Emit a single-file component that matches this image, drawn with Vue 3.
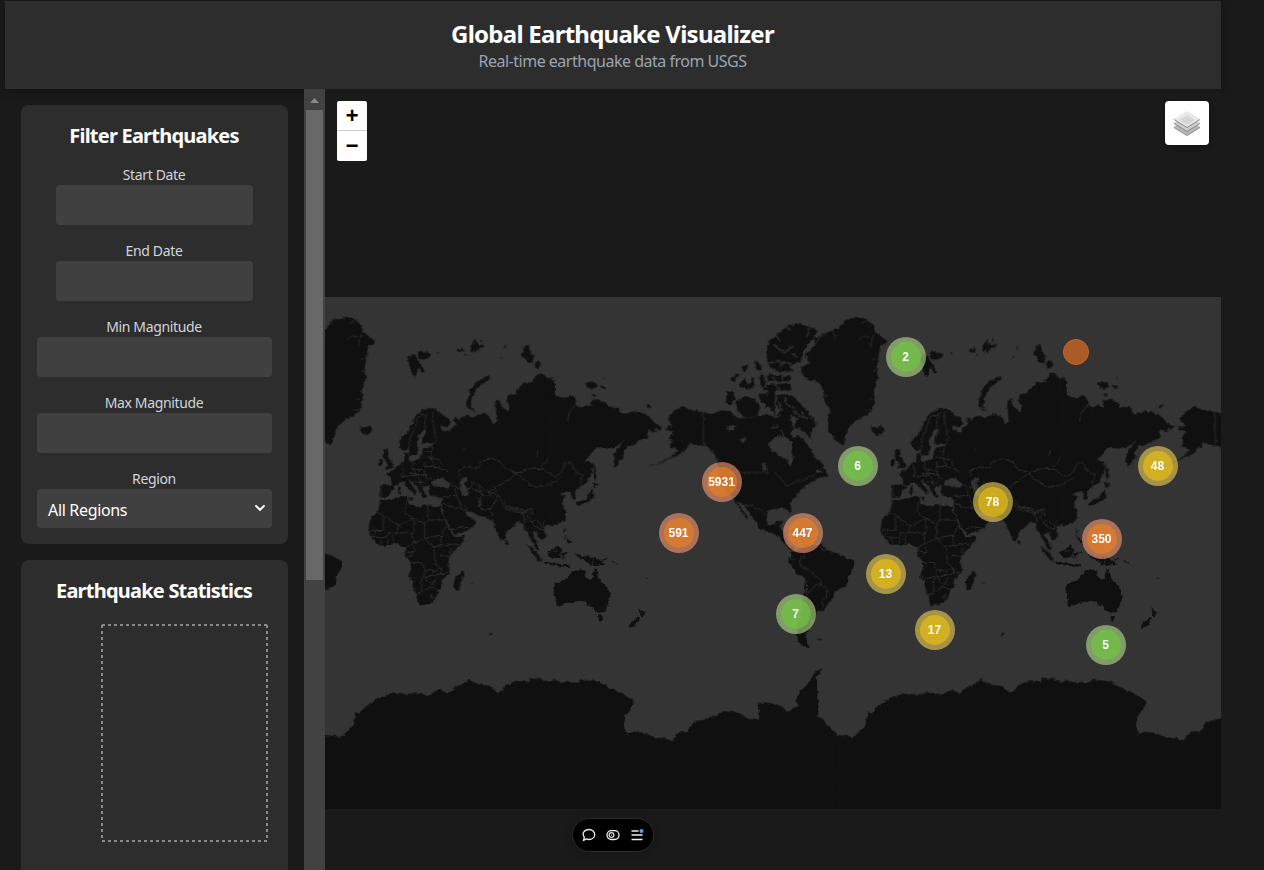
<script setup>
const filters = [
  { label: 'Start Date', kind: 'date' },
  { label: 'End Date', kind: 'date' },
  { label: 'Min Magnitude', kind: 'number' },
  { label: 'Max Magnitude', kind: 'number' },
]

const clusters = [
  { n: 2, x: 906, y: 357, size: 'small' },
  { n: 6, x: 858, y: 466, size: 'small' },
  { n: 48, x: 1158, y: 466, size: 'medium' },
  { n: 5931, x: 722, y: 482, size: 'large' },
  { n: 78, x: 993, y: 502, size: 'medium' },
  { n: 591, x: 679, y: 533, size: 'large' },
  { n: 447, x: 803, y: 533, size: 'large' },
  { n: 350, x: 1102, y: 539, size: 'large' },
  { n: 13, x: 886, y: 574, size: 'medium' },
  { n: 7, x: 796, y: 614, size: 'small' },
  { n: 17, x: 935, y: 630, size: 'medium' },
  { n: 5, x: 1106, y: 645, size: 'small' },
]
const place = (c) => ({ left: `${c.x - 345}px`, top: `${c.y - 109}px` })

// The same world repeats every 512px (1536 units of the land group).
const copies = [-1536, 0, 1536]
</script>

<template>
  <div class="page">
    <header class="header">
      <h1>Global Earthquake Visualizer</h1>
      <p>Real-time earthquake data from USGS</p>
    </header>

    <div class="body">
      <aside class="sidebar">
        <section class="card filters">
          <h2>Filter Earthquakes</h2>
          <div v-for="f in filters" :key="f.label" class="field">
            <label>{{ f.label }}</label>
            <div class="input" :class="f.kind"></div>
          </div>
          <div class="field last">
            <label>Region</label>
            <div class="select">
              <span>All Regions</span>
              <svg width="12" height="8" viewBox="0 0 12 8"><path d="M1.4 1.4 6 5.8l4.6-4.4" fill="none" stroke="#fff" stroke-width="2" /></svg>
            </div>
          </div>
        </section>
        <section class="card stats">
          <h2>Earthquake Statistics</h2>
          <svg class="chart" width="168" height="219" viewBox="0 0 168 219">
            <path d="M1 2H167M166 2V217M1 2V217M1 218H167" fill="none" stroke="#8a8a8a" stroke-width="2" stroke-dasharray="3 3" />
          </svg>
        </section>
      </aside>

      <div class="scrollbar">
        <svg width="21" height="21" viewBox="0 0 21 21"><path d="M6 14h9L10.500 9z" fill="#8b8b8b" /></svg>
        <div class="thumb"></div>
      </div>

      <main class="map">
        <svg class="world" width="896" height="512" viewBox="0 0 896 512">
          <defs>
            <filter id="coast" filterUnits="userSpaceOnUse" x="-10" y="0" width="916" height="520" color-interpolation-filters="sRGB">
              <feTurbulence type="fractalNoise" baseFrequency="0.24" numOctaves="3" seed="4" result="n" />
              <feDisplacementMap in="SourceGraphic" in2="n" scale="4" xChannelSelector="R" yChannelSelector="G" />
            </filter>
            <g id="earth">
              <!-- Eurasia, western half -->
              <path class="land" d="M236 467 223 456 222 435 240 420 252 405 262 380 272 362 295 345 318 337 335 345 350 357 372 372 377 385 365 397 345 390 350 405 362 410 374 400 385 388 388 370 398 368 400 380 412 365 430 362 440 368 460 362 475 354 487 362 495 370 507 388 515 380 513 350 510 318 522 312 530 335 550 350 556 335 545 320 548 300 570 298 575 285 600 262 620 262 640 234 655 240 668 250 690 262 690 677 670 683 660 692 656 708 665 720 655 733 648 737 640 725 635 710 626 712 622 725 635 740 643 767 633 762 622 740 612 725 608 710 598 705 595 685 580 680 570 690 545 710 543 728 530 740 520 720 510 695 508 683 495 675 480 665 465 663 435 650 415 643 425 660 440 670 455 677 440 700 410 712 388 718 380 705 355 660 350 640 352 610 330 605 316 600 310 590 315 572 298 574 292 582 305 604 298 610 285 590 275 574 262 560 250 554 258 568 275 590 268 602 262 590 245 575 235 562 225 562 212 572 200 585 190 605 165 610 163 570 200 568 196 545 182 538 205 525 225 505 238 498 240 476 252 475 252 494 Z" />
              <path class="sea" d="M236 468 250 460 255 482 275 480 281 460 275 440 280 425 298 400 307 405 293 430 290 446 325 445 325 452 300 458 292 470 287 490 262 498 250 494 252 474 240 474z" />
              <path class="sea" d="M320 570 325 555 340 550 355 552 378 566 370 578 345 576z M405 555 425 545 428 557 415 565 430 580 428 603 412 600 404 575z M346 550 358 545 352 556z M370 394 382 386 388 378 395 385 384 396 372 408 360 412 352 404z" />
              <!-- Nordic and British islands -->
              <path class="land" d="M100 393 110 404 102 406 118 420 135 415 143 403 133 392 118 398z M173 485 175 463 190 462 188 475 205 512 204 518 178 523 190 510z M160 512 162 496 174 492 172 512z M247 185 262 178 272 182 280 200 290 212 300 232 290 232 280 215 271 248 262 240 256 220z M278 172 290 166 300 172 318 176 316 188 298 194 282 192z M422 330 430 300 440 275 460 257 482 245 494 243 492 255 470 268 455 282 446 300 440 325 436 335 448 345 458 352 440 345z M395 165 403 160 405 166 412 155 414 164 420 170 410 168 400 171z M432 153 438 152 440 146 446 145 448 138 452 130 452 142 460 148 468 150 478 150 472 158 465 158 460 163 462 170 455 164 452 176 446 166 440 174 436 164 440 158z M590 180 600 150 610 148 618 172 626 184 622 205 610 200z M628 205 640 195 650 212 632 222z M337 172h6v4h-6z M538 155h5v4h-5z M526 186h5v4h-5z M465 133h8v4h-8z M418 178h6v3h-6z M220 570 228 580 224 602 219 592z M250 606 266 608 262 618z" />
              <!-- Africa -->
              <g transform="translate(0 615)">
                <path class="land" d="M165 0 182 0 205 -4 238 -12 247 -8 250 12 285 20 298 12 320 17 350 20 345 28 355 50 368 80 383 105 388 112 420 108 410 130 385 155 372 175 370 190 375 205 372 222 350 240 352 260 340 270 335 290 320 308 305 313 283 317 278 305 275 285 265 265 260 240 250 230 258 205 255 185 240 165 242 145 230 138 215 130 190 137 165 137 150 125 135 105 130 90 135 60 145 45 160 35z" />
                <path class="land" d="M388 268 386 250 392 230 405 222 412 210 415 225 406 255 400 270z M542 118 550 128 546 133 541 128z M608 135 622 145 645 170 652 187 638 180 622 160z M652 187 690 187 690 195 665 192z M668 155 690 150 700 140 712 148 705 170 690 174 672 168z M494 398h7v6h-7z M40 433l7 5z M435 248h10v2h-10z" />
                <g class="line">
                  <path d="M165 38 145 45M165 38 220 78 265 55 240 38 245 0M175 50V92L132 90M220 78 215 100 192 98 185 110 165 115M265 55 300 72 308 60V15M308 60H355M300 72 298 115 265 130 262 105 268 90 265 55M265 100 215 98M205 105 205 135M188 115V137M165 115 168 137M150 92 145 108 165 115M362 80 350 110 330 108 300 115M265 130 240 145M300 115 320 140 350 137 405 130M350 137 348 110M328 145 330 190 345 200M376 142V170L345 165M265 140 270 155 245 175M255 187H290L298 208 330 215 345 200 350 215M252 233H300L345 220M290 237V275L275 285M300 237 322 255 335 232M290 275 318 260 340 270M298 210V237M245 155H270M316 290 322 286 326 292 320 297zM340 225 370 215M350 205V225M355 10 375 20 400 25 420 30M400 0 435 35M465 0V25L490 30 505 15M490 30 505 45M505 15 520 0M538 0 545 20 590 35 600 70M545 20 600 30 610 50 625 75M625 75 650 90 660 60M620 65 635 60 650 80M380 90 410 80 440 85M595 40 610 30 620 45" />
                </g>
              </g>
              <g class="line">
                <path d="M252 465 255 430 270 395 280 365 300 360 315 350M302 360 298 400M325 350 322 375 335 430 325 450M322 450 318 490 330 515 370 530M265 495 262 520 300 530 300 498M228 508 235 530 230 550M300 470 318 470M295 485 318 490M300 515 330 515M262 520 280 545 290 575M255 535 300 540 320 555M230 545 280 540M270 560 300 565M300 530 305 560M185 568 210 575M165 580 172 605M318 490 345 495 350 515M402 545 400 525 430 515 460 520 465 500 500 490 525 500 540 520 575 535 550 555 510 580 490 590 460 570 440 560V580L425 580M575 535 620 520 640 520 690 535M575 535 610 565 640 578 690 560M380 570 410 585M388 580 395 600M460 570 470 600 500 600M490 590 520 600 500 640 465 645M520 600 540 640 590 655 620 640M465 600 460 640M355 605 395 600 410 640M440 580 480 600M500 570 515 590M590 655 605 680M620 640 625 660" />
              </g>
              <path class="line" d="M648 515 660 505 668 488M418 465h-6M635 485l5-20" />

              <!-- Eastern Asia, Pacific and Alaska -->
              <g transform="translate(660 0)">
                <path class="land" d="M0 250 22 248 27 265 20 285 5 300 20 300 40 305 62 310 75 300 92 310 92 330 105 340 120 330 137 335 140 315 160 313 180 322 190 335 220 338 228 355 255 355 262 348 285 352 310 362 330 385 352 393 345 405 330 400 335 412 310 403 308 430 280 440 265 450 250 450 233 470 236 490 225 495 218 512 209 518 207 500 205 485 215 465 235 440 243 430 230 442 205 460 165 460 150 460 135 480 120 497 135 500 145 512 140 535 130 555 118 568 105 575 90 590 92 612 80 615 78 592 62 590 45 600 62 605 50 625 62 650 55 675 35 690 0 692z" />
                <path class="land" d="M122 265 135 260 150 262 158 272 145 282 128 280z M165 272 182 275 180 282 168 278z M140 294 152 298 150 305 142 303z M302 334 315 329 320 335 308 340z M146 502 152 520 155 545 148 558 146 530z M142 560 160 568 148 580z M143 582 148 605 130 620 100 632 96 622 125 610 135 590z M58 662 62 668 55 682z M175 248h4v3h-4z M42 675h14l-8 8z" />
                <path class="land" d="M410 335 440 345 480 352 500 358 530 346 555 350 580 370 620 368 650 360 690 362 720 340 735 360 745 400 735 415 745 430 760 420 775 430 800 465 811 490 835 505 838 515 810 530 850 545 825 548 810 555 780 575 760 595 735 625 740 640 735 656 722 640 700 640 670 645 665 660 668 690 685 692 695 678 715 677 705 695 720 722 734 752 750 760 735 765 715 742 700 722 675 712 645 700 630 680 615 655 600 632 575 620 595 650 610 670 605 672 585 645 570 615 545 595 530 560 520 530 518 500 500 470 485 455 450 447 440 443 425 460 405 478 380 488 345 505 300 515 345 502 385 480 400 465 375 455 380 435 370 430 388 410 365 405 362 395 385 393 368 372 385 350z" />
                <path class="land" d="M670 190 668 155 690 130 690 195z M545 290 565 288 570 310 555 332 543 320z M572 318 600 303 630 310 645 335 638 365 600 368 578 350z M555 255 575 235 583 240 570 250 566 262z M590 215 608 208 608 218 600 228 592 226z M580 270 590 262 600 245 604 262 615 266 626 258 630 276 610 282 590 278z M628 195 636 198 650 215 645 228 632 218z M617 250 625 246 628 258 620 260z M642 252 652 232 662 250 660 275 648 278z M642 300 665 292 667 330 656 326 646 316z M668 232 684 240 690 252 676 246z M668 290 690 280 690 360 675 340z M650 178l8 8z M652 282 680 268 700 282 680 290z" />
                <path class="sea" d="M672 445 690 425 720 425 745 440 740 465 745 495 735 515 725 490 695 480 675 462z M545 395 575 388 565 405 550 405z M582 435 605 425 595 445z M650 505 660 500 665 525 655 528z" />
                <g class="line">
                  <path d="M475 352V447L500 465 522 500M542 532H675M685 532 705 545 725 575 755 560 790 550 815 535M580 625 620 632 650 645 660 660" />
                  <path d="M0 530 30 545 50 530 60 502 80 505 92 530 115 540 105 570M0 575 30 560 50 545M68 380 72 355 90 330M0 505 8 488" />
                </g>
                <g transform="translate(0 615)">
                  <path class="land" d="M25 260 30 250 55 243 75 225 80 215 100 208 122 212 118 228 135 240 142 235 148 205 158 220 165 240 185 258 197 285 192 305 180 335 160 338 145 330 135 312 128 320 120 305 95 302 65 310 50 317 35 318 33 300 27 280z M158 346 174 346 170 362 165 366z M280 318 290 332 302 335 292 353 285 345 286 335z M252 378 262 365 278 350 284 355 270 378 255 384z" />
                  <path class="land" d="M0 185 30 190 75 196 75 202 30 197 0 193z M8 155 25 150 40 135 47 145 40 170 20 174 10 165z M50 160 75 155 55 167 65 182 55 170 50 180z M90 160 112 168 130 170 150 172 165 180 182 195 165 192 150 198 135 195 118 180 100 172z M55 80 65 90 60 105 78 125 76 133 62 120z M5 70 12 68 8 78z M57 45l5 5-4 14z M170 180 190 172 175 185z M95 10 115 5 125 0 100 18z M200 180 230 200 200 184z M240 248 257 257 243 250z M300 236l8-6-4 6z M250 225l8 14z" />
                  <path class="line" d="M143 170V198M60 85l5 45M20 155l20-4" />
                </g>
              </g>

              <!-- Atlantic side of the Americas -->
              <g transform="translate(1320 0)">
                <path class="land" d="M235 452 210 435 190 410 188 375 195 345 178 315 175 285 160 260 130 255 108 235 110 215 135 205 120 180 150 150 145 130 180 115 220 100 240 75 280 67 305 72 325 90 330 110 368 140 345 155 340 190 335 220 340 250 325 290 330 310 322 345 295 365 275 375 250 400 240 430z" />
                <path class="land" d="M10 140 40 115 70 90 110 87 155 105 150 125 130 145 115 170 105 200 70 215 88 230 40 230 10 215 5 185z M5 240 75 243 76 258 10 260z M5 268 75 265 80 285 20 285z M35 300 80 298 100 320 125 345 155 385 140 410 135 430 110 405 85 395 100 370 60 355 35 335z M5 300 25 300 20 330 0 340z M50 375 70 385 60 400 40 395z M165 520 182 525 190 545 170 540z" />
                <path class="line inlet" d="M26 148 42 164 66 170 86 152M8 206 40 196 60 206M40 216 60 200 92 212M30 120 48 138M22 246 34 258M52 243V258M30 268 44 284M60 308 66 330 90 340M84 345 100 362 130 372M40 320 52 345M110 350 120 366M66 96 76 108M132 100 128 122M80 176 100 186" />
                <path class="line inlet" d="M50 405 56 425M96 400 104 420 128 430M14 352 30 366 48 362M18 400 40 392" />
                <path class="line" d="M150 150 165 125 185 120M280 135 295 123 315 125M325 120 315 155M195 98 215 125M205 110 210 140M305 75 290 85M300 345 322 345M334 190 322 194M336 230 324 226M322 310 308 316M190 350 200 354M178 300 188 302" />
                <g transform="translate(0 615)">
                  <path class="land" d="M75 155 85 152 95 158 100 150 120 140 130 135 160 137 172 130 178 145 200 155 240 170 268 185 265 205 252 225 248 255 215 270 205 290 190 310 175 332 155 338 150 355 140 362 135 378 130 395 120 405 125 430 137 441 118 442 100 425 95 400 105 350 115 300 118 260 120 235 95 220 75 190 70 180 80 165z M60 95 105 85 130 105 100 100z M120 108 140 105 140 115 120 115z M157 416h14v4h-14z M255 433l9 6z" />
                  <path class="line" d="M120 170 105 180 105 200 125 205 150 225 168 240 170 255 185 265 185 290 170 305 175 320M120 170 115 150M165 135 170 150 200 150M190 135V150M75 175 90 180M122 240 125 260 130 280 150 255 170 255M125 260 122 300 112 350 108 380" />
                </g>
              </g>

              <!-- Antarctica -->
              <path class="land" d="M-3 1322 25 1320 48 1328 85 1290 92 1252 105 1255 120 1235 150 1215 175 1203 200 1196 245 1197 270 1192 310 1200 345 1184 370 1195 385 1180 410 1168 430 1153 450 1165 495 1173 520 1194 545 1170 570 1158 610 1160 615 1150 650 1152 670 1162 685 1154 710 1162 750 1163 770 1154 820 1160 850 1178 890 1195 928 1220 918 1245 902 1260 896 1290 905 1322 915 1310 950 1313 990 1326 1020 1330 1040 1338 1064 1308 1090 1310 1105 1282 1150 1270 1180 1257 1195 1245 1240 1252 1270 1272 1302 1273 1298 1225 1325 1222 1370 1235 1390 1250 1420 1232 1410 1215 1425 1190 1450 1165 1470 1130 1495 1120 1475 1140 1480 1265 1500 1280 1525 1310 1539 1322V1560H-3z" />
            </g>
          </defs>
          <g filter="url(#coast)">
            <g transform="translate(0 -2) scale(.33333)">
              <use v-for="dx in copies" :key="dx" href="#earth" :transform="`translate(${dx} 0)`" />
            </g>
          </g>
        </svg>

        <div class="quake"></div>
        <div v-for="c in clusters" :key="c.n" class="cluster" :class="c.size" :style="place(c)">
          <span>{{ c.n }}</span>
        </div>

        <div class="zoom">
          <a><span>+</span></a>
          <a><span>−</span></a>
        </div>
        <div class="layers">
          <svg width="26" height="26" viewBox="0 0 26 26">
            <path d="M0 17v1l13 8 13-8v-1l-13-6z" fill="#898989" />
            <path d="M0 17 13 9l13 8-13 8z" fill="#b9b9b9" />
            <path d="M0 13v1l13 8 13-8v-1z" fill="#858585" />
            <path d="M0 13 13 5l13 8-13 8z" fill="#cdcdcd" />
            <path d="M0 9v1l13 8 13-8V9z" fill="#858585" />
            <path d="M0 9 13 1l13 8-13 8z" fill="#e9e9e9" />
            <path d="M5 10 13 5l8 5-8 5z" fill="#d6d6d6" />
          </svg>
        </div>
      </main>
    </div>

    <div class="toolbar">
      <svg width="14" height="14" viewBox="0 0 14 14"><path d="M1.500 12.500 2.400 9.300C-.6 5.500 2.500 1.500 7 1.500c3.200 0 5.700 2.100 5.700 5s-2.500 5-5.700 5c-1 0-1.900-.2-2.600-.6z" fill="none" stroke="#eee" stroke-width="1.300" stroke-linejoin="round" /></svg>
      <svg width="14" height="14" viewBox="0 0 14 14"><rect x="1" y="2.700" width="12" height="8.800" rx="4.400" fill="none" stroke="#eee" stroke-width="1.300" /><circle cx="5.500" cy="7.100" r="2.400" fill="none" stroke="#ddd" stroke-width="1.200" /><circle cx="5.500" cy="7.100" r=".7" fill="#eee" /></svg>
      <svg width="14" height="14" viewBox="0 0 14 14"><path d="M1.500 3h7M1.500 7h11M1.500 11.500h11" stroke="#eee" stroke-width="1.300" /><circle cx="11.500" cy="3" r="2" fill="#47a3f3" /></svg>
    </div>
  </div>
</template>

<style>
body {
  background: #1a1a1a;
  overflow: hidden;
}
</style>

<style scoped>
.page {
  box-sizing: border-box;
  width: 1264px;
  height: 870px;
  padding: 1px 43px 0 5px;
  overflow: hidden;
  position: relative;
  background: #1a1a1a;
  color: #fff;
  font-family: "Segoe UI", "Noto Sans", "Open Sans", sans-serif;
}
h1, h2, p { margin: 0; }
.header {
  box-sizing: border-box;
  height: 88px;
  padding-top: 17px;
  text-align: center;
  background: #2d2d2d;
  box-shadow: 0 2px 10px rgba(0, 0, 0, 0.3);
}
.header h1 { font-size: 24px; line-height: 32px; letter-spacing: -0.74px; padding-right: 1px; }
.header p { font-size: 16px; line-height: 23px; letter-spacing: -0.49px; padding-right: 1px; color: #9ca3af; }
.body { display: flex; height: 781px; }
.sidebar {
  box-sizing: border-box;
  width: 299px;
  padding: 16px;
  display: flex;
  flex-direction: column;
  gap: 16px;
  overflow: hidden;
}
.card {
  box-sizing: border-box;
  flex: none;
  background: #2d2d2d;
  border-radius: 8px;
  padding: 16px;
}
.filters { height: 439px; }
.stats { height: 400px; }
.card h2 {
  font-size: 20px;
  line-height: 30px;
  text-align: center;
  letter-spacing: -0.78px;
  padding-right: 1px;
  margin-bottom: 14px;
}
.field {
  display: flex;
  flex-direction: column;
  align-items: center;
  margin-bottom: 16px;
}
.field label {
  font-size: 14px;
  line-height: 20px;
  letter-spacing: -0.35px;
  padding-right: 1px;
  color: #d1d5db;
}
.input { height: 40px; background: #404040; border-radius: 4px; width: 100%; }
.input.date { width: 197px; }
.select {
  box-sizing: border-box;
  width: 100%;
  height: 39px;
  padding: 2px 6px 0 11px;
  display: flex;
  align-items: center;
  justify-content: space-between;
  background: #404040;
  border-radius: 4px;
  font-size: 16px;
  letter-spacing: -0.33px;
}
.select svg { margin-top: -3px; }
.chart { display: block; margin: 17px 0 0 64px; }
.scrollbar { width: 21px; background: #424242; display: flex; flex-direction: column; align-items: center; }
.scrollbar svg { display: block; }
.thumb { width: 17px; height: 470px; background: #686868; }
.map { position: relative; width: 896px; height: 781px; background: #1a1a1a; overflow: hidden; }
.world { position: absolute; left: 0; top: 208px; background: #343434; }
.land { fill: #101010; }
.sea { fill: #343434; }
.line { fill: none; stroke: #363636; stroke-width: 2.2px; }
.inlet { stroke: #343434; stroke-width: 4px; }
.cluster {
  position: absolute;
  width: 40px;
  height: 40px;
  border-radius: 50%;
  display: flex;
  align-items: center;
  justify-content: center;
  font: bold 12px/30px "Helvetica Neue", "Liberation Sans", Arial, sans-serif;
}
.cluster span { width: 30px; height: 30px; border-radius: 50%; text-align: center; text-indent: -1px; white-space: nowrap; }
.small { background: rgba(181, 226, 140, 0.6); }
.small span { background: rgba(110, 204, 57, 0.6); }
.medium { background: rgba(241, 211, 87, 0.6); }
.medium span { background: rgba(240, 194, 12, 0.6); }
.large { background: rgba(253, 156, 115, 0.6); }
.large span { background: rgba(241, 128, 23, 0.6); }
.quake {
  position: absolute;
  left: 738px;
  top: 250px;
  width: 26px;
  height: 26px;
  box-sizing: border-box;
  border-radius: 50%;
  border: 1px solid #cd6420;
  background: #ab5c26;
}
.zoom {
  position: absolute;
  left: 12px;
  top: 12px;
  width: 30px;
  border-radius: 2px;
  background: #fff;
  overflow: hidden;
}
.zoom a {
  display: block;
  height: 30px;
  color: #000;
  font: bold 22px/34px "Liberation Mono", monospace;
  text-align: center;
}
.zoom a:first-child { height: 29px; border-bottom: 1px solid #ccc; }
.layers {
  position: absolute;
  right: 12px;
  top: 12px;
  width: 44px;
  height: 44px;
  display: flex;
  align-items: center;
  justify-content: center;
  background: #fff;
  border-radius: 4px;
  box-shadow: 0 1px 5px rgba(0, 0, 0, 0.4);
}
.toolbar {
  position: absolute;
  left: 572px;
  top: 818px;
  box-sizing: border-box;
  width: 82px;
  height: 34px;
  display: flex;
  align-items: center;
  justify-content: center;
  gap: 10px;
  background: #000;
  border: 1px solid #2b2b2b;
  border-radius: 17px;
  box-shadow: 0 2px 10px rgba(0, 0, 0, 0.2);
}
</style>
